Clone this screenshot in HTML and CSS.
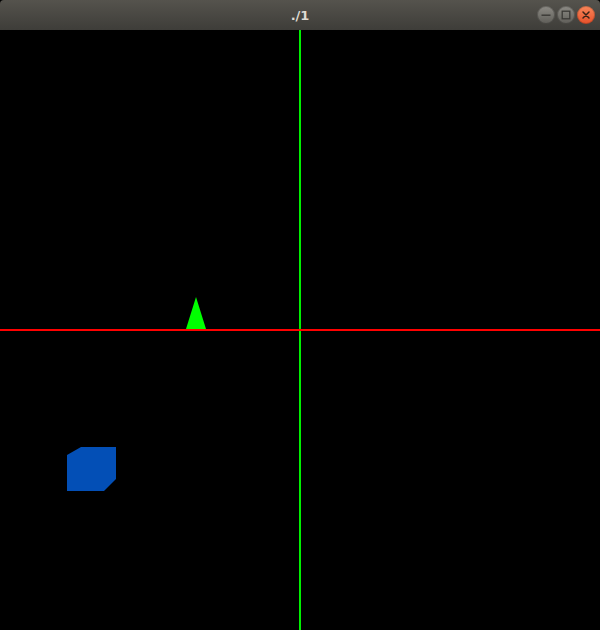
FILE: index.html
```html
<!DOCTYPE html>
<html>
<head>
<meta charset="utf-8">
<link rel="stylesheet" href="styles.css">
</head>
<body>
<div class="window">
  <div class="titlebar">
    <span class="title">./1</span>
    <div class="controls">
      <span class="btn btn-grey">
        <svg width="18" height="18" viewBox="0 0 18 18"><rect x="4.5" y="8.5" width="9" height="1.4" fill="#3a3935"/></svg>
      </span>
      <span class="btn btn-grey">
        <svg width="18" height="18" viewBox="0 0 18 18"><rect x="5.2" y="5.2" width="7.6" height="7.6" fill="none" stroke="#3a3935" stroke-width="1.3"/></svg>
      </span>
      <span class="btn btn-close">
        <svg width="18" height="18" viewBox="0 0 18 18"><path d="M6 6 L12 12 M12 6 L6 12" stroke="#3b2318" stroke-width="1.5" stroke-linecap="round"/></svg>
      </span>
    </div>
  </div>
  <svg class="canvas" width="600" height="600" viewBox="0 0 600 600">
    <rect x="0" y="0" width="600" height="600" fill="#000"/>
    <rect x="299" y="0" width="2" height="600" fill="#00f000"/>
    <polygon points="196,267 206,299 186,299" fill="#00ff00"/>
    <rect x="0" y="299" width="600" height="2" fill="#ff0000"/>
    <polygon points="81,417 116,417 116,449 104,461 67,461 67,425" fill="#034fb6"/>
  </svg>
</div>
</body>
</html>
```
FILE: styles.css
```css
html, body {
  margin: 0;
  padding: 0;
  background: #000;
}
.window {
  width: 600px;
  height: 630px;
  display: flex;
  flex-direction: column;
  overflow: hidden;
}
.titlebar {
  height: 30px;
  flex: none;
  position: relative;
  display: flex;
  align-items: center;
  justify-content: center;
  background: linear-gradient(#55534d, #3e3d39);
  border-radius: 4px 4px 0 0;
}
.title {
  font-family: "DejaVu Sans", sans-serif;
  font-weight: bold;
  font-size: 13px;
  color: #dfdbd2;
}
.controls {
  position: absolute;
  right: 5px;
  top: 6px;
  display: flex;
  gap: 2px;
}
.btn {
  width: 18px;
  height: 18px;
  border-radius: 50%;
  display: block;
}
.btn svg {
  display: block;
}
.btn-grey {
  background: linear-gradient(#8d8b85, #5e5d58);
  box-shadow: inset 0 0 0 1px rgba(0,0,0,0.25);
}
.btn-close {
  background: linear-gradient(#f9875a, #e6502a);
  box-shadow: inset 0 0 0 1px rgba(0,0,0,0.2);
}
.canvas {
  display: block;
  flex: none;
}
```
